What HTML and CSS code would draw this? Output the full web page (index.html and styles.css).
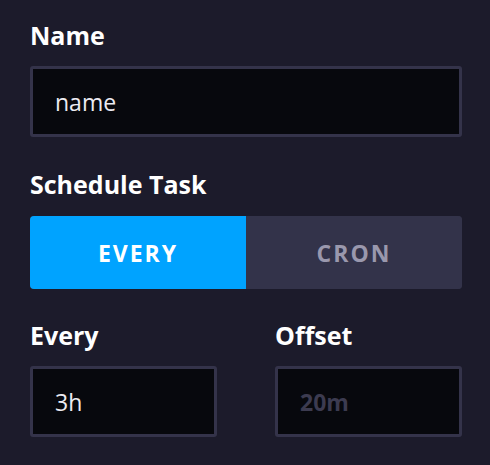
FILE: index.html
```html
<!DOCTYPE html>
<html lang="en">
<head>
<meta charset="utf-8">
<title>Schedule Task</title>
<link rel="stylesheet" href="styles.css">
</head>
<body>
<form class="form">
  <div class="field">
    <label class="label" for="name">Name</label>
    <input class="input" id="name" type="text" value="name">
  </div>
  <div class="field">
    <span class="label">Schedule Task</span>
    <div class="toggle">
      <button type="button" class="seg seg-active">EVERY</button>
      <button type="button" class="seg">CRON</button>
    </div>
  </div>
  <div class="row">
    <div class="field">
      <label class="label" for="every">Every</label>
      <input class="input" id="every" type="text" value="3h">
    </div>
    <div class="field">
      <label class="label" for="offset">Offset</label>
      <input class="input" id="offset" type="text" placeholder="20m">
    </div>
  </div>
</form>
</body>
</html>
```
FILE: styles.css
```css
* { box-sizing: border-box; }
html, body {
  margin: 0;
  background: #1c1b2b;
  height: 100%;
}
body {
  font-family: "Open Sans", "Liberation Sans", sans-serif;
  color: #ffffff;
  padding: 19px 28px 0 30px;
}
.form {
  display: flex;
  flex-direction: column;
  gap: 31px;
  width: 432px;
}
.field {
  display: flex;
  flex-direction: column;
  gap: 15px;
}
.field + .field {
  margin-top: 0;
}
.toggle-field {
  gap: 16px;
}
.label {
  font-size: 25px;
  font-weight: 700;
  line-height: 32px;
  color: #ffffff;
}
.input {
  height: 71px;
  width: 100%;
  background: #07080d;
  border: 3px solid #34334a;
  border-radius: 3px;
  padding: 0 22px;
  font-family: "Open Sans", "Liberation Sans", sans-serif;
  font-size: 23px;
  color: #ecebf2;
  outline: none;
}
.input::placeholder {
  color: #3c3b50;
  font-weight: 700;
}
.toggle {
  display: flex;
  height: 73px;
  margin-top: 1px;
  border-radius: 4px;
  overflow: hidden;
  background: #33334a;
}
.seg {
  flex: 1;
  border: 0;
  margin: 0;
  background: #33334a;
  color: #9a98ad;
  font-family: "Open Sans", "Liberation Sans", sans-serif;
  font-size: 23px;
  font-weight: 700;
  letter-spacing: 2px;
  padding: 0;
  cursor: pointer;
}
.seg-active {
  background: #00a3ff;
  color: #ffffff;
}
.row {
  display: grid;
  grid-template-columns: 187px 187px;
  column-gap: 58px;
  margin-top: -1px;
}
```
